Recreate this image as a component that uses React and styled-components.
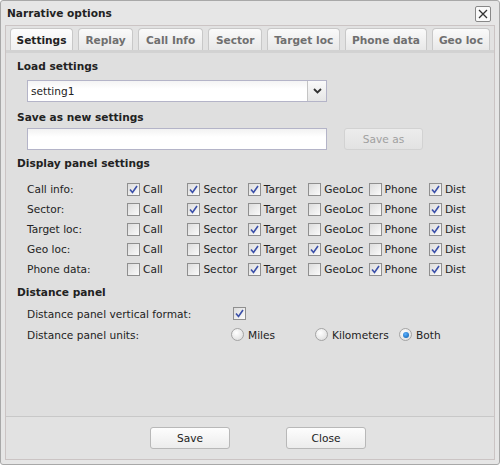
import React from "react";
import styled, { createGlobalStyle } from "styled-components";

const Global = createGlobalStyle`
  html, body { margin: 0; padding: 0; }
  body {
    font-family: "DejaVu Sans", Verdana, sans-serif;
    font-size: 10.6px;
    color: #222;
    background: #fff;
  }
`;

const Dialog = styled.div`
  box-sizing: border-box;
  width: 500px;
  height: 465px;
  border: 1px solid #a8a8a8;
  border-radius: 3px;
  background: #e6e6e6;
  display: flex;
  flex-direction: column;
  padding: 0 4px 4px 4px;
`;

const TitleBar = styled.div`
  height: 24px;
  display: flex;
  align-items: center;
  justify-content: space-between;
  padding: 0 4px 0 2px;
  font-weight: bold;
  color: #222;
`;

const CloseBtn = styled.div`
  width: 14px;
  height: 14px;
  border: 1px solid #888;
  border-radius: 2px;
  background: #fafafa;
  display: flex;
  align-items: center;
  justify-content: center;
  margin-top: 1px;
`;

const Body = styled.div`
  flex: 1;
  border: 1px solid #cbc4c4;
  background: #e2e2e2;
  display: flex;
  flex-direction: column;
`;

const TabStrip = styled.div`
  display: flex;
  gap: 5px;
  padding: 2px 4px 0 4px;
  height: 22px;
  border-bottom: 3px solid #d2d2d2;
`;

const Tab = styled.div`
  box-sizing: border-box;
  width: ${(p) => p.w}px;
  height: 22px;
  border: 1px solid #c8c8c8;
  border-bottom: none;
  border-radius: 4px 4px 0 0;
  background: ${(p) =>
    p.active ? "linear-gradient(#fdfdfd, #f0f0f0)" : "linear-gradient(#fafafa, #e8e8e8)"};
  color: ${(p) => (p.active ? "#222" : "#6f6f6f")};
  font-weight: bold;
  display: flex;
  align-items: center;
  justify-content: center;
`;

const Panel = styled.div`
  flex: 1;
  background: #dfdfdf;
  border-bottom: 1px solid #c8c8c8;
  padding: 5px 11px 0 11px;
`;

const Heading = styled.div`
  font-weight: bold;
  height: 16px;
  line-height: 16px;
  margin-bottom: ${(p) => p.mb || 0}px;
`;

const Indented = styled.div`
  padding-left: 10px;
`;

const FieldRow = styled.div`
  display: flex;
  align-items: center;
  gap: 17px;
  margin-bottom: ${(p) => p.mb || 0}px;
`;

const SelectBox = styled.div`
  box-sizing: border-box;
  width: 300px;
  height: 22px;
  border: 1px solid #b4b4c8;
  background: linear-gradient(#f4f4f4, #fff 40%);
  display: flex;
  align-items: center;
  justify-content: space-between;
  padding-left: 3px;
`;

const SelectArrow = styled.div`
  width: 18px;
  height: 20px;
  border-left: 1px solid #c4c4c4;
  background: linear-gradient(#fafafa, #e6e6e6);
  display: flex;
  align-items: center;
  justify-content: center;
`;

const TextBox = styled.div`
  box-sizing: border-box;
  width: 300px;
  height: 22px;
  border: 1px solid #b4b4c8;
  background: linear-gradient(#f2f2f2, #fff 40%);
`;

const Button = styled.div`
  box-sizing: border-box;
  width: ${(p) => p.w || 80}px;
  height: 22px;
  border: 1px solid ${(p) => (p.disabled ? "#d2d2d2" : "#b8b8b8")};
  border-radius: 3px;
  background: ${(p) =>
    p.disabled ? "linear-gradient(#ececec, #e2e2e2)" : "linear-gradient(#fdfdfd, #ececec)"};
  color: ${(p) => (p.disabled ? "#a0a0a0" : "#222")};
  display: flex;
  align-items: center;
  justify-content: center;
`;

const Grid = styled.div`
  display: grid;
  grid-template-columns: 100px repeat(6, 60.4px);
  grid-auto-rows: 20px;
  align-items: center;
  padding-left: 10px;
  margin-top: 8px;
  margin-bottom: 5px;
`;

const Check = styled.label`
  display: flex;
  align-items: center;
  gap: 3px;
  white-space: nowrap;
`;

const Box = styled.span`
  box-sizing: border-box;
  width: 13px;
  height: 13px;
  border: 1px solid #8f8f8f;
  background: linear-gradient(135deg, #dcdcdc, #fbfbfb);
  display: inline-flex;
  align-items: center;
  justify-content: center;
  flex: none;
`;

const Radio = styled.span`
  box-sizing: border-box;
  width: 13px;
  height: 13px;
  border-radius: 50%;
  border: 1px solid #a4a4a4;
  background: radial-gradient(circle at 40% 35%, #fff, #d8d8d8);
  display: inline-flex;
  align-items: center;
  justify-content: center;
  flex: none;
`;

const Dot = styled.span`
  width: 6px;
  height: 6px;
  border-radius: 50%;
  background: radial-gradient(circle at 40% 35%, #5ab0ff, #0a5aa8);
`;

const OptRow = styled.div`
  display: flex;
  align-items: center;
  height: 21px;
`;

const OptLabel = styled.div`
  width: 206px;
`;

const RadioGroup = styled.div`
  display: flex;
  margin-left: 7px;
`;

const RadioItem = styled(Check)`
  width: 84px;
  gap: 4px;
`;

const Footer = styled.div`
  height: 42px;
  display: flex;
  align-items: center;
  justify-content: center;
  gap: 56px;
  padding-left: 16px;
`;

const Tick = () => (
  <svg width="9" height="9" viewBox="0 0 9 9">
    <path d="M1 4.5 L3.5 7.5 L8 1" fill="none" stroke="#3a4fa8" strokeWidth="1.6" />
  </svg>
);

const CheckBox = ({ on, label }) => (
  <Check>
    <Box>{on && <Tick />}</Box>
    {label}
  </Check>
);

const tabs = [
  ["Settings", 64],
  ["Replay", 56],
  ["Call Info", 66],
  ["Sector", 55],
  ["Target loc", 74],
  ["Phone data", 83],
  ["Geo loc", 59],
];

const cols = ["Call", "Sector", "Target", "GeoLoc", "Phone", "Dist"];
const rows = [
  ["Call info:", [1, 1, 1, 0, 0, 1]],
  ["Sector:", [0, 1, 0, 0, 0, 1]],
  ["Target loc:", [0, 0, 1, 0, 0, 1]],
  ["Geo loc:", [0, 0, 1, 1, 0, 1]],
  ["Phone data:", [0, 0, 1, 0, 1, 1]],
];

export default function App() {
  return (
    <>
      <Global />
      <Dialog>
        <TitleBar>
          <span>Narrative options</span>
          <CloseBtn>
            <svg width="10" height="10" viewBox="0 0 10 10">
              <path d="M1 1 L9 9 M9 1 L1 9" stroke="#333" strokeWidth="1.3" />
            </svg>
          </CloseBtn>
        </TitleBar>
        <Body>
          <TabStrip>
            {tabs.map(([t, w], i) => (
              <Tab key={t} w={w} active={i === 0}>
                {t}
              </Tab>
            ))}
          </TabStrip>
          <Panel>
            <Heading mb={6}>Load settings</Heading>
            <Indented>
              <FieldRow mb={7}>
                <SelectBox>
                  <span>setting1</span>
                  <SelectArrow>
                    <svg width="9" height="6" viewBox="0 0 9 6">
                      <path d="M1 1 L4.5 4.5 L8 1" fill="none" stroke="#333" strokeWidth="1.8" />
                    </svg>
                  </SelectArrow>
                </SelectBox>
              </FieldRow>
            </Indented>
            <Heading mb={3}>Save as new settings</Heading>
            <Indented>
              <FieldRow mb={5}>
                <TextBox />
                <Button w={79} disabled>
                  Save as
                </Button>
              </FieldRow>
            </Indented>
            <Heading>Display panel settings</Heading>
            <Grid>
              {rows.map(([name, vals]) => (
                <React.Fragment key={name}>
                  <span>{name}</span>
                  {cols.map((c, i) => (
                    <CheckBox key={c} on={!!vals[i]} label={c} />
                  ))}
                </React.Fragment>
              ))}
            </Grid>
            <Heading mb={3}>Distance panel</Heading>
            <Indented>
              <OptRow>
                <OptLabel>Distance panel vertical format:</OptLabel>
                <Box>
                  <Tick />
                </Box>
              </OptRow>
              <OptRow>
                <OptLabel>Distance panel units:</OptLabel>
                <RadioGroup>
                  <RadioItem>
                    <Radio />
                    Miles
                  </RadioItem>
                  <RadioItem>
                    <Radio />
                    Kilometers
                  </RadioItem>
                  <RadioItem>
                    <Radio>
                      <Dot />
                    </Radio>
                    Both
                  </RadioItem>
                </RadioGroup>
              </OptRow>
            </Indented>
          </Panel>
          <Footer>
            <Button w={80}>Save</Button>
            <Button w={80}>Close</Button>
          </Footer>
        </Body>
      </Dialog>
    </>
  );
}
